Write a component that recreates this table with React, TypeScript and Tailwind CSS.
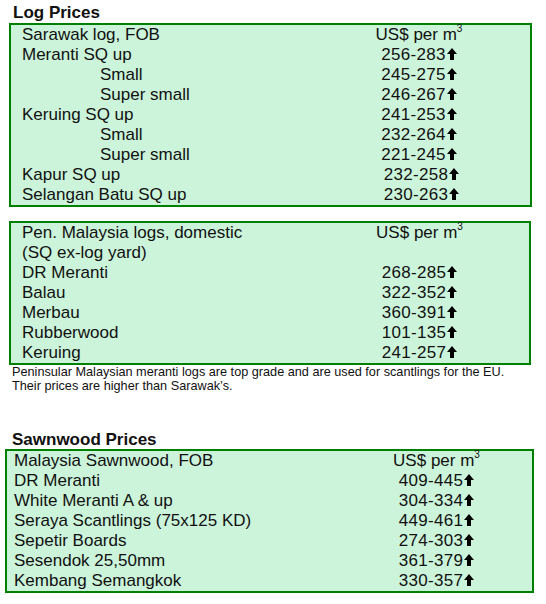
import React from 'react';

type Row = { label: string; price?: string; indent?: boolean; nudge?: boolean };

const sarawakRows: Row[] = [
  { label: 'Meranti SQ up', price: '256-283' },
  { label: 'Small', price: '245-275', indent: true },
  { label: 'Super small', price: '246-267', indent: true },
  { label: 'Keruing SQ up', price: '241-253' },
  { label: 'Small', price: '232-264', indent: true },
  { label: 'Super small', price: '221-245', indent: true },
  { label: 'Kapur SQ up', price: '232-258', nudge: true },
  { label: 'Selangan Batu SQ up', price: '230-263', nudge: true },
];

const penRows: Row[] = [
  { label: '(SQ ex-log yard)' },
  { label: 'DR Meranti', price: '268-285' },
  { label: 'Balau', price: '322-352' },
  { label: 'Merbau', price: '360-391' },
  { label: 'Rubberwood', price: '101-135' },
  { label: 'Keruing', price: '241-257' },
];

const sawnRows: Row[] = [
  { label: 'DR Meranti', price: '409-445' },
  { label: 'White Meranti A & up', price: '304-334' },
  { label: 'Seraya Scantlings (75x125 KD)', price: '449-461' },
  { label: 'Sepetir Boards', price: '274-303' },
  { label: 'Sesendok 25,50mm', price: '361-379' },
  { label: 'Kembang Semangkok', price: '330-357' },
];

const UpArrow = () => (
  <svg width="10" height="12" viewBox="0 0 10 12" className="inline-block ml-[1px] align-baseline">
    <path d="M5 0 L10 6 L7 6 L7 12 L3 12 L3 6 L0 6 Z" fill="#000" />
  </svg>
);

const Unit = () => (
  <span>
    US$ per m<span className="relative -top-[8px] text-[10px] leading-none">3</span>
  </span>
);

interface BoxProps {
  heading: string;
  rows: Row[];
  boxClass: string;
  gridClass: string;
}

const PriceBox = ({ heading, rows, boxClass, gridClass }: BoxProps) => (
  <div className={`border-2 border-[#008000] bg-[#ccf4da] text-[17px] leading-[20px] ${boxClass}`}>
    <div className={`grid ${gridClass}`}>
      <div>{heading}</div>
      <div className="text-center">
        <Unit />
      </div>
    </div>
    {rows.map((r, i) => (
      <div key={i} className={`grid ${gridClass}`}>
        <div className={r.indent ? 'pl-[78px]' : ''}>{r.label}</div>
        <div className={`text-center ${r.nudge ? 'pl-[5px]' : ''}`}>
          {r.price && (
            <>
              <span className="tracking-[0.3px]">{r.price}</span>
              <UpArrow />
            </>
          )}
        </div>
      </div>
    ))}
  </div>
);

export default function App() {
  return (
    <div className="w-[546px] h-[604px] bg-white pt-[3px] font-['Liberation_Sans',Arial,sans-serif] text-[#111]">
      <h2 className="pl-[13px] text-[17px] leading-[20px] font-bold">Log Prices</h2>
      <PriceBox
        heading="Sarawak log, FOB"
        rows={sarawakRows}
        boxClass="ml-[9px] w-[523px] pl-[11px]"
        gridClass="grid-cols-[286px_1fr]"
      />

      <PriceBox
        heading="Pen. Malaysia logs, domestic"
        rows={penRows}
        boxClass="mt-[14px] ml-[9px] w-[522px] pl-[11px]"
        gridClass="grid-cols-[288px_1fr]"
      />
      <p className="pl-[12px] text-[12.7px] leading-[14px]">
        Peninsular Malaysian meranti logs are top grade and are used for scantlings for the EU.
        <br />
        Their prices are higher than Sarawak’s.
      </p>

      <h2 className="mt-[37px] pl-[12px] text-[17px] leading-[19px] font-bold">Sawnwood Prices</h2>
      <PriceBox
        heading="Malaysia Sawnwood, FOB"
        rows={sawnRows}
        boxClass="ml-[5px] w-[529px] pl-[7px]"
        gridClass="grid-cols-[327px_1fr]"
      />
    </div>
  );
}
